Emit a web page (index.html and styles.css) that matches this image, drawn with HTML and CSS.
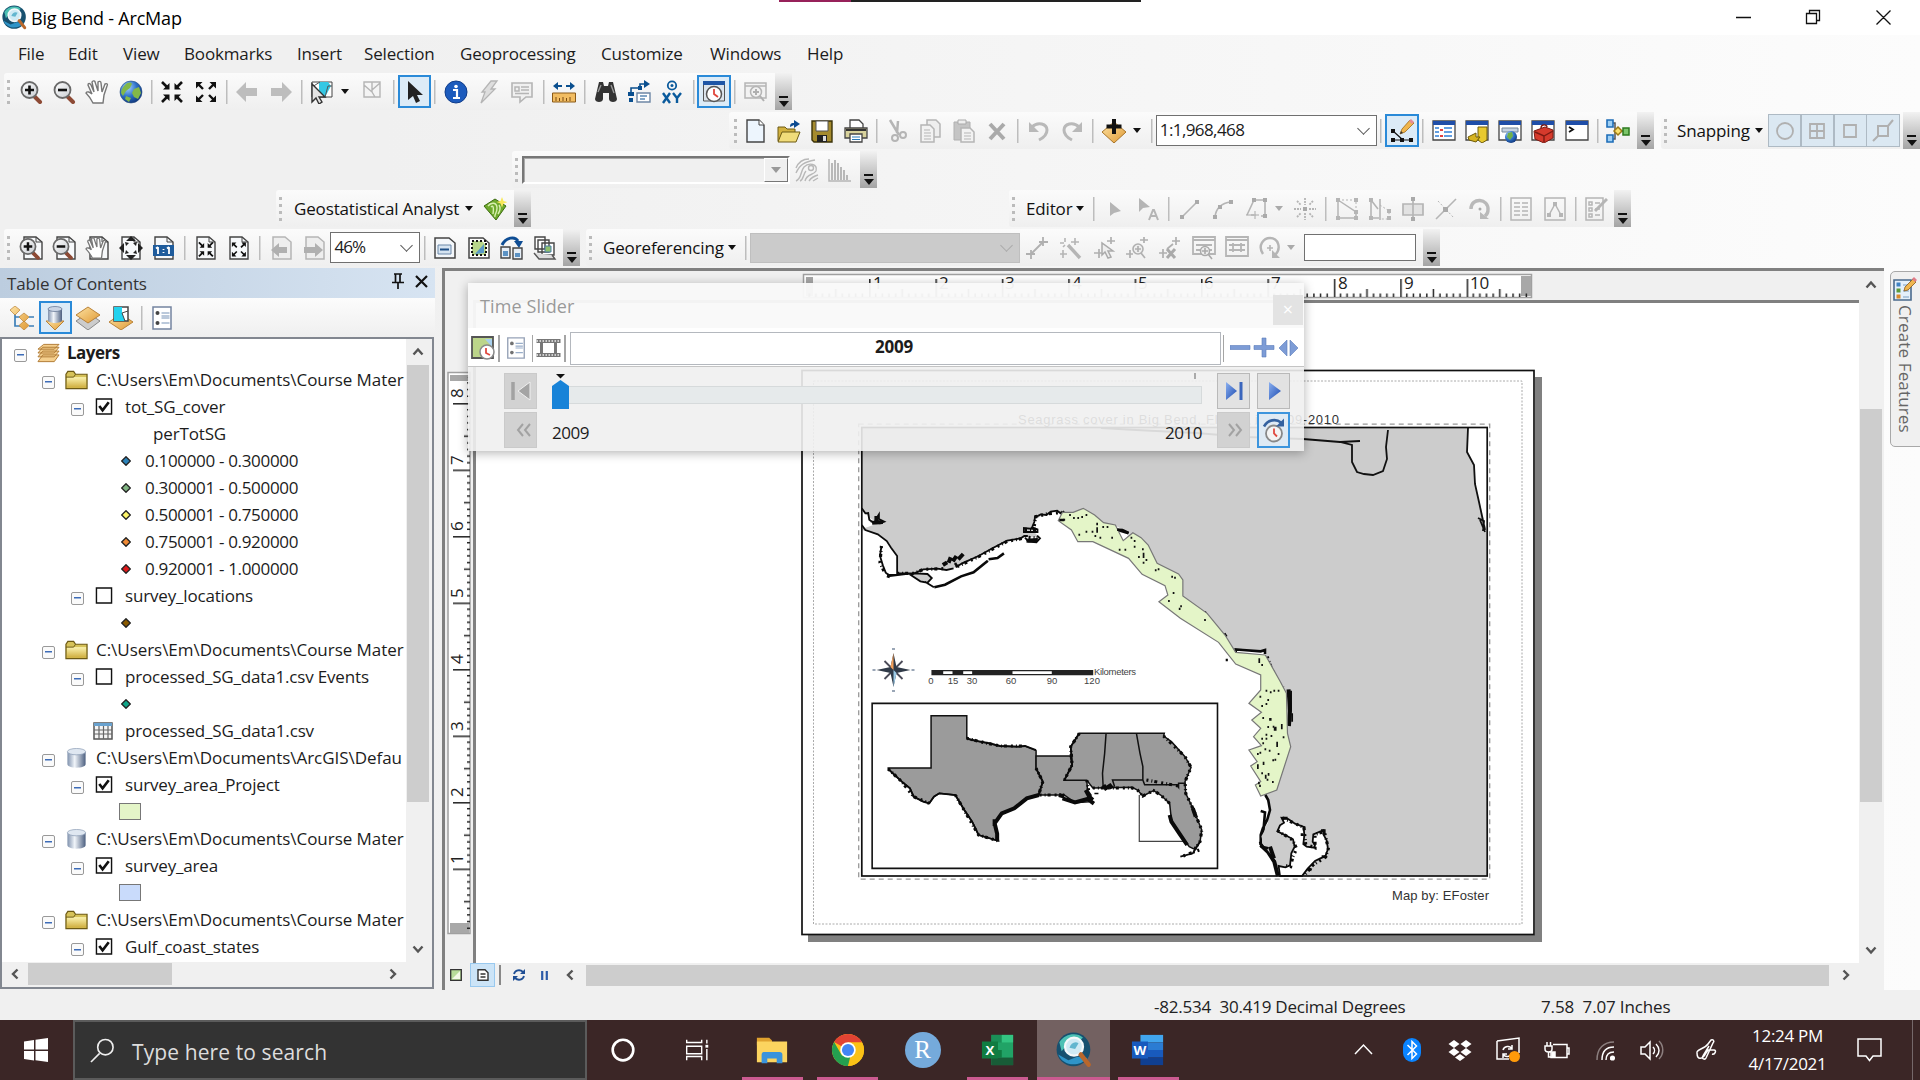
FILE: index.html
```html
<!DOCTYPE html>
<html lang="en">
<head>
<meta charset="utf-8">
<title>Big Bend - ArcMap</title>
<link rel="stylesheet" href="styles.css">
</head>
<body>
<svg class="defs" aria-hidden="true">
<defs>
<linearGradient id="gLens" x1="0" y1="0" x2="1" y2="1"><stop offset="0" stop-color="#fff"/><stop offset="1" stop-color="#c9cdd2"/></linearGradient>
<linearGradient id="gCyl" x1="0" x2="1"><stop offset="0" stop-color="#7f91ad"/><stop offset=".4" stop-color="#f1f5fa"/><stop offset="1" stop-color="#4c5f80"/></linearGradient>
<linearGradient id="gFold" x1="0" y1="0" x2="0" y2="1"><stop offset="0" stop-color="#fbf3b0"/><stop offset="1" stop-color="#cfae3e"/></linearGradient>
<linearGradient id="gOr" x1="0" y1="0" x2="1" y2="1"><stop offset="0" stop-color="#fde3a4"/><stop offset="1" stop-color="#e09a35"/></linearGradient>
<linearGradient id="gBlue" x1="0" y1="0" x2="1" y2="1"><stop offset="0" stop-color="#8bb0f0"/><stop offset="1" stop-color="#1a49b0"/></linearGradient>
<radialGradient id="gGlobe" cx=".35" cy=".3" r=".8"><stop offset="0" stop-color="#a8d4ff"/><stop offset=".5" stop-color="#2e72c8"/><stop offset="1" stop-color="#0b2c6e"/></radialGradient>
</defs>
<symbol id="lens" viewBox="0 0 24 24"><path d="M15 16l6 6" stroke="#8d4a35" stroke-width="4" stroke-linecap="round"/><circle cx="10.500" cy="10" r="8" fill="url(#gLens)" stroke="#6a6a6a" stroke-width="1.800"/></symbol>
<symbol id="zin" viewBox="0 0 24 24"><use href="#lens"/><path d="M10.500 5.500v9M6 10h9" stroke="#111" stroke-width="2.600"/></symbol>
<symbol id="zout" viewBox="0 0 24 24"><use href="#lens"/><path d="M6 10h9" stroke="#111" stroke-width="2.600"/></symbol>
<symbol id="pan" viewBox="0 0 24 24"><path d="M8 23c-2-4-4-7-7-10 1-2 4-1 6 1L3 5c0-2 2-2 3 0l3 7-2-10c1-2 3-1 3 0l3 9V2c1-1 3-1 3 1l1 9 3-8c2-1 3 0 2 2l-3 9-1 8z" fill="#fff" stroke="#777" stroke-width="1.400"/></symbol>
<symbol id="globe" viewBox="0 0 24 24"><circle cx="12" cy="12" r="11" fill="url(#gGlobe)" stroke="#234a80" stroke-width=".6"/><path d="M6 5c3-3 6-3 7-1l-2 4-4 3-3 5-2-3c0-3 2-6 4-8zM15 9l5-2 2 6-3 6-4-2-2-4zM7 16l5 2-2 4-4-3z" fill="#82b848"/></symbol>
<symbol id="fin" viewBox="0 0 24 24"><path d="M2 2l5 5M22 2l-5 5M2 22l5-5M22 22l-5-5" stroke="#111" stroke-width="2.600"/><path d="M9.500 3v6.500H3zM14.500 3v6.500H21zM9.500 21v-6.500H3zM14.500 21v-6.500H21z" fill="#111"/></symbol>
<symbol id="fout" viewBox="0 0 24 24"><path d="M4 4l5 5M20 4l-5 5M4 20l5-5M20 20l-5-5" stroke="#111" stroke-width="2.400"/><path d="M2 2v6.500L8.500 2zM22 2v6.500L15.500 2zM2 22v-6.500L8.500 22zM22 22v-6.500L15.500 22z" fill="#111"/></symbol>
<symbol id="back" viewBox="0 0 24 24"><path d="M1 12L11 2v6h11v8H11v6z" fill="#bdbdbd"/></symbol>
<symbol id="fwd" viewBox="0 0 24 24"><path d="M23 12L13 2v6H2v8h11v6z" fill="#bdbdbd"/></symbol>
<symbol id="sel" viewBox="0 0 24 24"><path d="M2 2h20v15H2z" fill="#fff" stroke="#444"/><path d="M9 2h9l3 4-6 11H9z" fill="#35c8e4"/><path d="M2 7l8-5M15 17l3-11h4" stroke="#555" fill="none"/><path d="M2 4v18l4-4 3 6 3-2-3-5h6z" fill="#e4e4e4" stroke="#333" stroke-width="1.400"/></symbol>
<symbol id="clr" viewBox="0 0 24 24"><path d="M4 2h16v15H4zM4 5l8 7V2M12 12l3 5M12 10l8-7" fill="#f4f4f4" stroke="#b5b5b5" stroke-width="1.400"/></symbol>
<symbol id="arr" viewBox="0 0 24 24"><path d="M6 1v19l5-4 3 7 4-2-3-6h6z" fill="#222"/></symbol>
<symbol id="info" viewBox="0 0 24 24"><circle cx="12" cy="12" r="11" fill="#1c5bbd" stroke="#0f3c8a"/><circle cx="12" cy="6.500" r="1.800" fill="#fff"/><path d="M9 10h4v8m-4 0h7" stroke="#fff" stroke-width="2.200" fill="none"/></symbol>
<symbol id="bolt" viewBox="0 0 24 24"><path d="M14 1h6l-6 8h4L4 23l4-11H5z" fill="#dedede" stroke="#b5b5b5" stroke-width="1.300"/></symbol>
<symbol id="html" viewBox="0 0 24 24"><path d="M2 3h20v14h-6l-6 5v-5H2z" fill="#f0f0f0" stroke="#b5b5b5" stroke-width="1.600"/><path d="M5 7h4v4H5zM11 7h8M11 10h8M5 13.500h14" stroke="#b5b5b5" stroke-width="1.500" fill="none"/></symbol>
<symbol id="meas" viewBox="0 0 24 24"><path d="M1 6l5-4v3h4v2H6v3zM23 6l-5-4v3h-4v2h4v3z" fill="#0a4f8f"/><path d="M.5 13h23v9H.5z" fill="#f2bd62" stroke="#8a5a18"/><path d="M4 21v-4M7.500 21v-3M11 21v-4M14.500 21v-3M18 21v-4" stroke="#7a4a10"/></symbol>
<symbol id="bino" viewBox="0 0 24 24"><path d="M5 2h4l1 4h4l1-4h4l4 17c0 4-8 4-8 0v-6h-6v6c0 4-8 4-8 0z" fill="#333"/><path d="M4 12l3-7M17 5l3 8" stroke="#999" stroke-width="1.400"/></symbol>
<symbol id="route" viewBox="0 0 24 24"><path d="M4 13V8h9V4h5" stroke="#0a4f8f" stroke-width="1.600" fill="none"/><path d="M17 0l6 4-6 4zM1 12h6v4H1zM2 18h4v4H2zM11 6h4v4h-4z" fill="#0a4f8f"/><path d="M10 13h13v9H10z" fill="#fff" stroke="#6d87a5" stroke-width="1.400"/><path d="M13 16h7M13 19h5" stroke="#0a4f8f"/></symbol>
<symbol id="xy" viewBox="0 0 24 24"><circle cx="12" cy="5.500" r="4.200" fill="none" stroke="#0a5a9c" stroke-width="1.800"/><circle cx="12" cy="5.500" r="1.500" fill="#0a5a9c"/><path d="M3 13l7 10M10 13l-7 10M13 13l4 5 4-5M17 18v5" stroke="#0a5a9c" stroke-width="2.400" fill="none"/></symbol>
<symbol id="time" viewBox="0 0 24 24"><path d="M1.500 2h21v19h-21z" fill="#dce4ec" stroke="#555"/><path d="M1 1h22v4H1z" fill="#1f56a6"/><circle cx="12" cy="14" r="7.500" fill="#fff" stroke="#555" stroke-width="1.500"/><path d="M12 9v5l4 3" stroke="#e0463c" stroke-width="1.800" fill="none"/></symbol>
<symbol id="viewer" viewBox="0 0 24 24"><path d="M1 3h21v15H1zM1 6h21" fill="#f2f2f2" stroke="#b5b5b5" stroke-width="1.500"/><circle cx="12" cy="12" r="5.500" fill="#f2f2f2" stroke="#b5b5b5" stroke-width="1.500"/><path d="M9 12h6M12 9v6M16 16l4 5" stroke="#b0b0b0" stroke-width="2"/></symbol>
<symbol id="new" viewBox="0 0 24 24"><path d="M3 1h12l5 5v17H3z" fill="#edf5fd" stroke="#444" stroke-width="1.400"/><path d="M15 1v5h5" fill="#fff" stroke="#444"/></symbol>
<symbol id="open" viewBox="0 0 24 24"><path d="M1 8h7l2 2h8v12H1z" fill="#d2b13f" stroke="#6d5a14"/><path d="M5 13h18l-4 10H1z" fill="#f1dc7a" stroke="#6d5a14"/><path d="M13 8c0-4 2-4 4-4V1l6 4-6 4V6" fill="#0b4a92"/></symbol>
<symbol id="save" viewBox="0 0 24 24"><path d="M2 2h20v21H4l-2-2z" fill="#a58b2e" stroke="#3b3208" stroke-width="1.400"/><path d="M6 2h12v10H6z" fill="#fff" stroke="#555"/><path d="M7 16h10v7H7z" fill="#222"/><path d="M13 17h3v5h-3z" fill="#ddd"/></symbol>
<symbol id="print" viewBox="0 0 24 24"><path d="M6 1h9l4 4v6H6z" fill="#fff" stroke="#444" stroke-width="1.300"/><path d="M1 9h22v10H1z" fill="#d8d29c" stroke="#444" stroke-width="1.300"/><path d="M2 11h20" stroke="#333" stroke-width="2"/><path d="M6 15h12v8H6z" fill="#fff" stroke="#444" stroke-width="1.300"/><path d="M8 18h8M8 20.500h8" stroke="#2878b8"/></symbol>
<symbol id="cut" viewBox="0 0 24 24"><path d="M5 1l9 15M13 2l-1 12" stroke="#b5b5b5" stroke-width="2.500"/><circle cx="10" cy="19" r="3" fill="none" stroke="#b5b5b5" stroke-width="2"/><circle cx="18" cy="16" r="3" fill="none" stroke="#b5b5b5" stroke-width="2"/></symbol>
<symbol id="copy" viewBox="0 0 24 24"><path d="M8 1h9l4 4v13H8z" fill="#eee" stroke="#b5b5b5" stroke-width="1.500"/><path d="M2 6h9l4 4v13H2z" fill="#f2f2f2" stroke="#b5b5b5" stroke-width="1.500"/><path d="M5 11h6M5 14h7M5 17h7M5 20h7" stroke="#b5b5b5"/></symbol>
<symbol id="paste" viewBox="0 0 24 24"><path d="M2 3h16v18H2z" fill="#c4c4c4" stroke="#b0b0b0"/><path d="M6 1h8v4H6z" fill="#eee" stroke="#aaa"/><path d="M9 9h9l4 4v10H9z" fill="#f2f2f2" stroke="#b5b5b5" stroke-width="1.500"/><path d="M12 14h7M12 17h7M12 20h7" stroke="#b5b5b5"/></symbol>
<symbol id="del" viewBox="0 0 24 24"><path d="M5 5l14 15M19 5L5 20" stroke="#aaa" stroke-width="4"/></symbol>
<symbol id="undo" viewBox="0 0 24 24"><path d="M5 8c6-6 15-3 15 3 0 5-4 8-8 10" stroke="#b9b9b9" stroke-width="3" fill="none"/><path d="M2 3v10h10z" fill="#b9b9b9"/></symbol>
<symbol id="redo" viewBox="0 0 24 24"><path d="M19 8C13 2 4 5 4 11c0 5 4 8 8 10" stroke="#b9b9b9" stroke-width="3" fill="none"/><path d="M22 3v10H12z" fill="#b9b9b9"/></symbol>
<symbol id="add" viewBox="0 0 24 24"><path d="M12 3L24 13 12 24 0 13z" fill="url(#gOr)" stroke="#a8752a"/><path d="M12 0v15M4.500 7.500h15" stroke="#111" stroke-width="4"/></symbol>
<symbol id="edt" viewBox="0 0 24 24"><path d="M3 12l10 9M3 21h18" stroke="#111" stroke-width="1.200"/><path d="M1 10h4v4H1zM1 19h4v4H1zM10 19h4v4h-4zM19 19h4v4h-4z" fill="#111"/><path d="M10 15l2-5 8-9 4 3-9 9z" fill="#f0b64e" stroke="#a06b18" stroke-width=".8"/><path d="M19 2l2-2 3 3-2 2z" fill="#e58a96"/><path d="M10 15l1-3 2 2z" fill="#333"/></symbol>
<symbol id="win" viewBox="0 0 24 24"><path d="M1 2h22v19H1z" fill="#fff" stroke="#444" stroke-width="1.300"/><path d="M1 2h22v4H1z" fill="#1f4ea8"/></symbol>
<symbol id="wtoc" viewBox="0 0 24 24"><use href="#win"/><path d="M3 9h4M3 13h4M3 17h4M12 9h8M12 13h8M12 17h8" stroke="#2f7fd8" stroke-width="1.600"/><path d="M8 11h3M8 17h3" stroke="#e04040" stroke-width="2"/></symbol>
<symbol id="wcat" viewBox="0 0 24 24"><use href="#win"/><path d="M13 8h9v13l-5 3-4-3z" fill="#e8c92f" stroke="#6f5c0a"/><path d="M3 18l8-4v4h4l-4 5-7-2z" fill="#d7b421" stroke="#6f5c0a"/></symbol>
<symbol id="wsea" viewBox="0 0 24 24"><use href="#win"/><path d="M4 9h16v4H4z" fill="#c6d3e2" stroke="#789"/><circle cx="13" cy="18" r="6" fill="url(#gGlobe)"/><path d="M10 14l4-1 1 4-3 4-3-3z" fill="#6fb04a"/></symbol>
<symbol id="wbox" viewBox="0 0 24 24"><use href="#win"/><path d="M3 12l11-4 8 3v8l-9 5-9-4z" fill="#d63a2c" stroke="#7c1a12"/><path d="M4 13l9 4 9-5M13 17v6M10 9c0-4 6-4 6-1" stroke="#7c1a12" stroke-width="1.400" fill="none"/></symbol>
<symbol id="wpy" viewBox="0 0 24 24"><use href="#win"/><path d="M4 8l4 2.500L4 13" stroke="#111" stroke-width="1.800" fill="none"/></symbol>
<symbol id="model" viewBox="0 0 24 24"><path d="M6 4h3v16H6M9 12h10" stroke="#555" stroke-width="1.500" fill="none"/><path d="M1 1h6v7H1zM1 16h6v7H1z" fill="#9fd0f5" stroke="#1e6db8" stroke-width="1.600"/><path d="M12 8l4 4-4 4-4-4z" fill="#fbe06c" stroke="#9c7a14" stroke-width="1.500"/><path d="M17 9h6v7h-6z" fill="#7cc56a" stroke="#2d7a1e" stroke-width="1.500"/></symbol>
<symbol id="s1" viewBox="0 0 24 24"><circle cx="12" cy="12" r="8" fill="none" stroke="#b0b0b0" stroke-width="1.800"/></symbol>
<symbol id="s2" viewBox="0 0 24 24"><path d="M5 5h14v14H5zM5 12h14M12 5v14" fill="none" stroke="#b0b0b0" stroke-width="1.800"/></symbol>
<symbol id="s3" viewBox="0 0 24 24"><path d="M6 6h12v12H6z" fill="none" stroke="#b0b0b0" stroke-width="1.800"/></symbol>
<symbol id="s4" viewBox="0 0 24 24"><path d="M7 7h10v10H7zM2 22l5-5M17 7l5-6" fill="none" stroke="#b0b0b0" stroke-width="2"/></symbol>
<symbol id="cont" viewBox="0 0 24 24"><path d="M1 10C4 3 9 1 14 1M1 15C5 6 10 4 20 2M1 23c6-3 4-9 8-14 5-5 14-3 12 4-3 5-9 2-11 10M5 23c4-2 3-7 6-10M14 23c2-3 5-5 9-6M18 23l5-3" fill="none" stroke="#b8b8b8" stroke-width="1.400"/><circle cx="16" cy="10" r="2.500" fill="none" stroke="#b8b8b8" stroke-width="1.400"/></symbol>
<symbol id="hist" viewBox="0 0 24 24"><path d="M1 1v22h22" stroke="#b5b5b5" stroke-width="1.500" fill="none"/><path d="M4 5v17M7 2v20M10 5v17M13 9v13M16 12v10M19 17v5" stroke="#b8b8b8" stroke-width="2"/></symbol>
<symbol id="geo" viewBox="0 0 24 24"><path d="M12 2l11 7-10 14L1 9z" fill="#6ea92c" stroke="#3c6b10"/><path d="M5 9c3-4 9-4 9 2s-3 6-2 9M8 10c2-2 3 0 2 7M16 8c2 3 1 6-1 9" stroke="#d8efb0" stroke-width="1.400" fill="none"/><path d="M19 0l1.500 4 4 1-4 1.500-1.500 4-1.500-4-4-1.500 4-1z" fill="#f8e85a"/></symbol>
<symbol id="ea" viewBox="0 0 24 24"><path d="M7 5v14l4-3 7-2z" fill="#b5b5b5"/></symbol>
<symbol id="eaa" viewBox="0 0 24 24"><path d="M3 1v14l4-4 7-1z" fill="#b5b5b5"/><path d="M13 23l4-10h1l4 10M14.500 19h6" stroke="#b5b5b5" stroke-width="2" fill="none"/></symbol>
<symbol id="ln" viewBox="0 0 24 24"><path d="M4 20L19 5" stroke="#b5b5b5" stroke-width="1.600"/><path d="M2 18h4v4H2zM17 3h4v4h-4z" fill="#aaa"/></symbol>
<symbol id="arc" viewBox="0 0 24 24"><path d="M4 20c1-9 6-14 16-15" stroke="#b5b5b5" stroke-width="1.600" fill="none"/><path d="M2 18h4v4H2zM18 3h4v4h-4zM7 8h4v4H7z" fill="#aaa"/></symbol>
<symbol id="trc" viewBox="0 0 24 24"><path d="M2 18L9 3h11v16h-4" stroke="#b5b5b5" stroke-width="1.600" fill="none"/><path d="M7 1h4v4H7zM18 1h4v4h-4zM18 17h4v4h-4z" fill="#aaa"/><path d="M1 18h8M10 14v8M6 18h8" stroke="#aaa"/></symbol>
<symbol id="pt" viewBox="0 0 24 24"><path d="M12 1v7M12 16v7M1 12h7M16 12h7M4 4l4 4M20 4l-4 4M4 20l4-4M20 20l-4-4" stroke="#b5b5b5" stroke-width="1.800" stroke-dasharray="2 1"/><path d="M10 10h4v4h-4z" fill="#aaa"/></symbol>
<symbol id="ev" viewBox="0 0 24 24"><path d="M3 3v18h18v-6L3 3" stroke="#b5b5b5" stroke-width="1.500" fill="none"/><path d="M3 3h18v12" stroke="#b5b5b5" stroke-dasharray="2 2" fill="none"/><path d="M1 1h4v4H1zM1 19h4v4H1zM19 19h4v4h-4zM19 13h4v4h-4zM19 1h4v4h-4z" fill="#b5b5b5"/></symbol>
<symbol id="rsh" viewBox="0 0 24 24"><path d="M3 3v18h8M3 3l7 9M12 2v21" stroke="#b5b5b5" stroke-width="1.600" fill="none"/><path d="M12 8l9 6v8h-9" stroke="#b5b5b5" stroke-dasharray="2 2" fill="none"/><path d="M1 1h4v4H1zM1 19h4v4H1zM19 12h4v4h-4zM19 19h4v4h-4z" fill="#b5b5b5"/></symbol>
<symbol id="cutp" viewBox="0 0 24 24"><path d="M2 7h20v11H2z" fill="#e2e2e2" stroke="#b5b5b5" stroke-width="1.700"/><path d="M12 1v22" stroke="#b5b5b5" stroke-width="1.700"/><path d="M10 0h4v4h-4zM10 20h4v4h-4z" fill="#aaa"/></symbol>
<symbol id="split" viewBox="0 0 24 24"><path d="M2 22L22 2" stroke="#b5b5b5" stroke-width="1.600"/><path d="M4 4l16 17" stroke="#b5b5b5" stroke-dasharray="2 2"/><path d="M9 10h5v5H9z" fill="#aaa"/></symbol>
<symbol id="rot" viewBox="0 0 24 24"><path d="M3 12c0-12 18-11 17 1 0 4-2 5-3 6" stroke="#b9b9b9" stroke-width="3.400" fill="none"/><path d="M12 15l9 7H12z" fill="#b9b9b9"/><circle cx="12" cy="12" r="1.500" fill="#aaa"/></symbol>
<symbol id="attr" viewBox="0 0 24 24"><path d="M2 1h20v22H2zM5 6h6M5 10h6M5 14h6M5 18h6M13 6h6M13 10h6M13 14h6M13 18h6" fill="none" stroke="#b5b5b5" stroke-width="1.500"/></symbol>
<symbol id="skp" viewBox="0 0 24 24"><path d="M2 1h20v22H2zM6 18l6-11 6 11" fill="none" stroke="#b5b5b5" stroke-width="1.500"/><path d="M10 5h4v4h-4zM4 16h4v4H4zM16 16h4v4h-4z" fill="#b5b5b5"/></symbol>
<symbol id="cfg" viewBox="0 0 24 24"><path d="M2 1h17v22H2zM5 5h3v3H5zM5 11h3v3H5zM5 17h3v3H5zM11 6h5M11 12h5M11 18h5" fill="none" stroke="#b5b5b5" stroke-width="1.500"/><path d="M11 14l12-12" stroke="#b5b5b5" stroke-width="3"/></symbol>
<symbol id="page" viewBox="0 0 24 24"><path d="M5 1h12l6 5v17H5z" fill="#f7f9fb" stroke="#444" stroke-width="1.400"/><path d="M17 1v5h6" fill="none" stroke="#444"/></symbol>
<symbol id="pzin" viewBox="0 0 24 24"><use href="#page"/><g transform="translate(-1 1) scale(.95)"><use href="#zin" width="24" height="24"/></g></symbol>
<symbol id="pzout" viewBox="0 0 24 24"><use href="#page"/><g transform="translate(-1 1) scale(.95)"><use href="#zout" width="24" height="24"/></g></symbol>
<symbol id="ppan" viewBox="0 0 24 24"><use href="#page"/><use href="#pan" width="22" height="24"/></symbol>
<symbol id="pfull" viewBox="0 0 24 24"><use href="#page" x="-2"/><path d="M12 0l5 5H7zM12 24l5-5H7zM0 12l5-5v10zM24 12l-5-5v10zM6 6l4 1-3 3zM18 6l-4 1 3 3zM6 18l4-1-3-3zM18 18l-4-1 3-3z" fill="#222"/></symbol>
<symbol id="p11" viewBox="0 0 24 24"><use href="#page" x="-2"/><path d="M1 9h21v11H1z" fill="#1f5c9c"/><path d="M6 11v7M17 11v7M4 12.500l2-1.500M15 12.500l2-1.500M11.500 13v1M11.500 16v1" stroke="#fff" stroke-width="1.800"/></symbol>
<symbol id="pfin" viewBox="0 0 24 24"><use href="#page" x="-2"/><g transform="translate(3.500 5) scale(.7)"><use href="#fin" width="24" height="24"/></g></symbol>
<symbol id="pfout" viewBox="0 0 24 24"><use href="#page" x="-2"/><g transform="translate(3.500 5) scale(.7)"><use href="#fout" width="24" height="24"/></g></symbol>
<symbol id="gpage" viewBox="0 0 24 24"><path d="M4 1h12l6 5v17H4z" fill="#eee" stroke="#b5b5b5" stroke-width="1.500"/></symbol>
<symbol id="pback" viewBox="0 0 24 24"><use href="#gpage"/><path d="M2 14l8-7v4h8v6h-8v4z" fill="#b0b0b0"/></symbol>
<symbol id="pfwd" viewBox="0 0 24 24"><use href="#gpage"/><path d="M21 14l-8-7v4H2v6h11v4z" fill="#b0b0b0"/></symbol>
<symbol id="drf" viewBox="0 0 24 24"><path d="M2 2h14l6 5v15H2z" fill="#f4f7fa" stroke="#444" stroke-width="1.500"/><path d="M5 9h13v9H5z" fill="#d6e4f1" stroke="#6a87a8"/><path d="M7 13.500h9" stroke="#1e4f86" stroke-width="2"/></symbol>
<symbol id="foc" viewBox="0 0 24 24"><path d="M2 2h14l6 5v15H2z" fill="#fff" stroke="#444" stroke-width="1.500"/><path d="M5 5h10l4 4v10H5z" fill="#b8d68a"/><path d="M8 18l9-10v9z" fill="#5a9ac8"/><path d="M5 5h14v14H5z" fill="none" stroke="#111" stroke-width="2" stroke-dasharray="2 2"/></symbol>
<symbol id="chg" viewBox="0 0 24 24"><path d="M2 9C6 1 15 0 18 5" stroke="#0e4d94" stroke-width="3" fill="none"/><path d="M14 5h9l-4 7z" fill="#0e4d94"/><path d="M1 11h9v11H1zM13 12h9v11h-9z" fill="#e6eef6" stroke="#444" stroke-width="1.400"/><path d="M3 15h5v5H3zM15 17h5v4h-5z" fill="#5b92c4"/></symbol>
<symbol id="ddp" viewBox="0 0 24 24"><path d="M2 1h10v12H2zM5 4h11v12H5zM9 7h12v12H9z" fill="#fff" stroke="#444" stroke-width="1.400"/><path d="M12 10h6v6h-6z" fill="#8fc06a" stroke="#4a7ea8"/><path d="M1 17l5 6h16l-3-4" stroke="#555" stroke-width="1.400" fill="#ddd"/></symbol>
<symbol id="g1" viewBox="0 0 24 24"><path d="M1 18h9M6 14v9M14 6h9M18 1v9M7 17L17 7" stroke="#b0b0b0" stroke-width="1.800"/></symbol>
<symbol id="g2" viewBox="0 0 24 24"><path d="M10 9l12 13" stroke="#b5b5b5" stroke-width="3.400"/><path d="M17 2v7M13 6h8M2 18h7M5 14v8M7 2v4M2 7h4M5 11l2-2" stroke="#b5b5b5" stroke-width="1.600"/></symbol>
<symbol id="g3" viewBox="0 0 24 24"><path d="M10 7v12l3-3 3 6 3-1-3-6h5z" fill="#eee" stroke="#aaa" stroke-width="1.500"/><path d="M2 17h8M7 13v9M15 5h8M19 1v7" stroke="#b0b0b0" stroke-width="1.700"/></symbol>
<symbol id="g4" viewBox="0 0 24 24"><circle cx="13" cy="13" r="5" fill="#eee" stroke="#b0b0b0" stroke-width="1.600"/><path d="M10 13h6M13 10v6M16 17l4 5M1 18h7M5 14v8M15 4h8M19 1v6" stroke="#b0b0b0" stroke-width="1.700"/></symbol>
<symbol id="g5" viewBox="0 0 24 24"><path d="M9 13l8 9M17 13l-8 9" stroke="#aaa" stroke-width="3"/><path d="M1 17h8M5 13v9M14 5h8M18 1v8M9 13l6-5" stroke="#b0b0b0" stroke-width="1.700"/></symbol>
<symbol id="g6" viewBox="0 0 24 24"><path d="M1 1h22v17H1zM1 4h22M4 9h16M4 14h16" fill="none" stroke="#b5b5b5" stroke-width="1.800"/><circle cx="13" cy="15" r="4.500" fill="#eee" stroke="#aaa" stroke-width="1.500"/><path d="M10 15h6M13 12v6M16 18l4 5" stroke="#aaa" stroke-width="1.600"/></symbol>
<symbol id="g7" viewBox="0 0 24 24"><path d="M1 1h22v19H1zM1 4h22M4 9h16M4 14h16M8 7v9M16 7v9" fill="none" stroke="#b5b5b5" stroke-width="1.800"/></symbol>
<symbol id="g8" viewBox="0 0 24 24"><path d="M5 18C-1 9 6 2 12 2c8 0 12 10 5 17" fill="none" stroke="#b5b5b5" stroke-width="2.400"/><path d="M14 14v8h8z" fill="#b5b5b5"/><path d="M9 12h6M12 9v6" stroke="#b5b5b5" stroke-width="1.600"/></symbol>
<symbol id="arcgis" viewBox="0 0 32 32"><circle cx="15.500" cy="15.500" r="15" fill="#17506f"/><path d="M3 9c5-8 16-9 21-4l-4 3-9 2-6 7z" fill="#4cc0b4"/><path d="M2 20c4 10 18 12 26 3l-9-1-8 3z" fill="#2f94c8"/><circle cx="16" cy="13" r="8" fill="#cfeaf4" stroke="#f4f8fa" stroke-width="2"/><path d="M12 14c1-4 5-6 8-4l-3 5z" fill="#62b6cf"/><path d="M22 20l7 9" stroke="#b9672b" stroke-width="4" stroke-linecap="round"/></symbol>
<symbol id="folder" viewBox="0 0 24 20"><path d="M1 4l2-3h6l2 3h12v15H1z" fill="#d6c25a" stroke="#6d5a14" stroke-width="1.300"/><path d="M2 7h20v11H2z" fill="url(#gFold)"/><path d="M1 7l8 0 2-3" fill="none" stroke="#6d5a14"/></symbol>
<symbol id="db" viewBox="0 0 22 22"><path d="M1 4v14c0 5 20 5 20 0V4z" fill="url(#gCyl)"/><ellipse cx="11" cy="4" rx="10" ry="3.500" fill="#dfe7f1" stroke="#7f91ad" stroke-width=".7"/></symbol>
<symbol id="layers" viewBox="0 0 24 20"><g fill="#f5cf8d" stroke="#b07a34"><path d="M6 12h17l-5 7H1zM6 8h17l-5 6H1zM6 4h17l-5 6H1zM7 1h16l-5 5H1z"/></g></symbol>
<symbol id="tbl" viewBox="0 0 20 18"><path d="M1 1h18v16H1z" fill="#f5f5f5" stroke="#555" stroke-width="1.500"/><path d="M1 1h18v3H1z" fill="#69a2cf"/><path d="M1 8h18M1 12h18M6 4v13M10.500 4v13M15 4v13" stroke="#666" stroke-width="1.200"/></symbol>
<symbol id="t1" viewBox="0 0 24 24"><path d="M5 6v14h8M5 11h8M19 11h5M19 20h5" stroke="#3c7fb8" stroke-width="1.700" fill="none"/><path d="M5 0l5 4-5 5-5-5zM14 7l5 4-5 5-5-5zM14 15l5 4.500-5 4.500-5-4.500z" fill="url(#gOr)" stroke="#b98238" stroke-width=".7"/></symbol>
<symbol id="t2" viewBox="0 0 24 24"><path d="M3 15h18l-9 9z" fill="url(#gOr)" stroke="#b98238"/><path d="M5 3v11c0 4 14 4 14 0V3z" fill="url(#gCyl)"/><ellipse cx="12" cy="3" rx="7" ry="2.500" fill="#c9d4e4" stroke="#5c6f8e" stroke-width=".7"/></symbol>
<symbol id="t3" viewBox="0 0 24 24"><path d="M12 7l12 8-12 9L0 15z" fill="#ccc" stroke="#888"/><path d="M12 1l12 8-12 8L0 9z" fill="url(#gOr)" stroke="#b98238"/></symbol>
<symbol id="t4" viewBox="0 0 24 24"><path d="M12 8l12 8-12 8L0 16z" fill="url(#gOr)" stroke="#b98238"/><path d="M5 1h14v14H5z" fill="#fff" stroke="#444" stroke-width="1.500"/><path d="M5 1h8v6l3 8H5z" fill="#22d2ee"/><path d="M13 7l6-2M13 7l3 8" stroke="#444"/></symbol>
<symbol id="t5" viewBox="0 0 24 24"><path d="M3 1h18v22H3z" fill="#fff" stroke="#7484a0" stroke-width="1.500"/><circle cx="7.500" cy="7" r="2" fill="#444"/><circle cx="7.500" cy="17" r="2" fill="#444"/><path d="M11.500 7h8M11.500 12h8M11.500 17h8M11.500 10h8" stroke="#7893b8" stroke-width="1.200"/></symbol>
<symbol id="chk" viewBox="0 0 18 18"><path d="M1 1h16v16H1z" fill="#fff" stroke="#111" stroke-width="1.500"/><path d="M4 8.500l3.500 4.500 6.500-8.500" fill="none" stroke="#111" stroke-width="2.800"/></symbol>
<symbol id="unchk" viewBox="0 0 18 18"><path d="M1 1h16v16H1z" fill="#fff" stroke="#111" stroke-width="1.500"/></symbol>
<symbol id="dia" viewBox="0 0 10 10"><path d="M5 .7L9.300 5 5 9.300.7 5z" fill="currentColor" stroke="#222" stroke-width="1.300"/></symbol>
<symbol id="cv" viewBox="0 0 12 12"><path d="M1.500 8.500L6 3.500l4.500 5" fill="none" stroke="#555" stroke-width="2.400"/></symbol>
<symbol id="cl" viewBox="0 0 12 12"><path d="M8.500 1.500L4 6l4.500 4.500" fill="none" stroke="#555" stroke-width="2.400"/></symbol>
</svg>

<div class="edge"></div>
<header class="title"><svg class="app"><use href="#arcgis"/></svg><span>Big Bend - ArcMap</span>
<svg class="wc" viewBox="0 0 160 20"><path d="M0 9.500h15M70.500 5.500h10v10h-10zM73.500 5.500v-3h10v10h-3M140.500 2.500l14 14M154.500 2.500l-14 14" fill="none" stroke="#111" stroke-width="1.300"/></svg></header>
<nav class="menu"><span>File</span><span>Edit</span><span>View</span><span>Bookmarks</span><span>Insert</span><span>Selection</span><span>Geoprocessing</span><span>Customize</span><span>Windows</span><span>Help</span></nav>

<section class="bars">
<div class="row">
<div class="tb r1"><i class="grip"></i><b><svg><use href="#zin"/></svg></b><b><svg><use href="#zout"/></svg></b><b><svg><use href="#pan"/></svg></b><b><svg><use href="#globe"/></svg></b><i class="sep"></i><b><svg><use href="#fin"/></svg></b><b><svg><use href="#fout"/></svg></b><i class="sep"></i><b><svg><use href="#back"/></svg></b><b><svg><use href="#fwd"/></svg></b><i class="sep"></i><b><svg><use href="#sel"/></svg></b><i class="dd"></i><b><svg><use href="#clr"/></svg></b><i class="sep"></i><b class="on"><svg><use href="#arr"/></svg></b><i class="sep"></i><b><svg><use href="#info"/></svg></b><b><svg><use href="#bolt"/></svg></b><b><svg><use href="#html"/></svg></b><i class="sep"></i><b><svg><use href="#meas"/></svg></b><i class="sep"></i><b><svg><use href="#bino"/></svg></b><b><svg><use href="#route"/></svg></b><b><svg><use href="#xy"/></svg></b><i class="sep"></i><b class="on"><svg><use href="#time"/></svg></b><i class="sep"></i><b><svg><use href="#viewer"/></svg></b><i class="ovf"></i></div>
</div>
<div class="row">
<div class="tb r2"><i class="grip"></i><b><svg><use href="#new"/></svg></b><b><svg><use href="#open"/></svg></b><b><svg><use href="#save"/></svg></b><b><svg><use href="#print"/></svg></b><i class="sep"></i><b><svg><use href="#cut"/></svg></b><b><svg><use href="#copy"/></svg></b><b><svg><use href="#paste"/></svg></b><b><svg><use href="#del"/></svg></b><i class="sep"></i><b><svg><use href="#undo"/></svg></b><b><svg><use href="#redo"/></svg></b><i class="sep"></i><b><svg><use href="#add"/></svg></b><i class="dd"></i><i class="sep"></i><span class="combo scale"><span>1:1,968,468</span><em></em></span><i class="sep"></i><b class="on"><svg><use href="#edt"/></svg></b><i class="sep"></i><b><svg><use href="#wtoc"/></svg></b><b><svg><use href="#wcat"/></svg></b><b><svg><use href="#wsea"/></svg></b><b><svg><use href="#wbox"/></svg></b><b><svg><use href="#wpy"/></svg></b><i class="sep"></i><b><svg><use href="#model"/></svg></b><i class="ovf"></i></div>
<div class="tb snap"><i class="grip"></i><span class="lbl w76">Snapping</span><i class="dd"></i><b class="sn"><svg><use href="#s1"/></svg></b><b class="sn"><svg><use href="#s2"/></svg></b><b class="sn"><svg><use href="#s3"/></svg></b><b class="sn"><svg><use href="#s4"/></svg></b><i class="ovf"></i></div>
</div>
<div class="row">
<div class="tb r3"><i class="grip"></i><span class="oldcombo"><em></em></span><b><svg><use href="#cont"/></svg></b><b><svg><use href="#hist"/></svg></b><i class="ovf"></i></div>
</div>
<div class="row">
<div class="tb r4"><i class="grip"></i><span class="lbl w169">Geostatistical Analyst</span><i class="dd"></i><b><svg><use href="#geo"/></svg></b><i class="ovf"></i></div>
<div class="tb ed"><i class="grip"></i><span class="lbl w48">Editor</span><i class="dd"></i><i class="sep"></i><b><svg><use href="#ea"/></svg></b><b><svg><use href="#eaa"/></svg></b><i class="sep"></i><b><svg><use href="#ln"/></svg></b><b><svg><use href="#arc"/></svg></b><b><svg><use href="#trc"/></svg></b><i class="dd off"></i><b><svg><use href="#pt"/></svg></b><i class="sep"></i><b><svg><use href="#ev"/></svg></b><b><svg><use href="#rsh"/></svg></b><b><svg><use href="#cutp"/></svg></b><b><svg><use href="#split"/></svg></b><b><svg><use href="#rot"/></svg></b><i class="sep"></i><b><svg><use href="#attr"/></svg></b><b><svg><use href="#skp"/></svg></b><i class="sep"></i><b><svg><use href="#cfg"/></svg></b><i class="ovf"></i></div>
</div>
<div class="row">
<div class="tb r5"><i class="grip"></i><b><svg><use href="#pzin"/></svg></b><b><svg><use href="#pzout"/></svg></b><b><svg><use href="#ppan"/></svg></b><b><svg><use href="#pfull"/></svg></b><b><svg><use href="#p11"/></svg></b><i class="sep"></i><b><svg><use href="#pfin"/></svg></b><b><svg><use href="#pfout"/></svg></b><i class="sep"></i><b><svg><use href="#pback"/></svg></b><b><svg><use href="#pfwd"/></svg></b><span class="combo zoom"><span>46%</span><em></em></span><i class="sep"></i><b><svg><use href="#drf"/></svg></b><b><svg><use href="#foc"/></svg></b><b><svg><use href="#chg"/></svg></b><b><svg><use href="#ddp"/></svg></b><i class="ovf"></i></div>
<div class="tb geor"><i class="grip"></i><span class="lbl w122">Georeferencing</span><i class="dd"></i><i class="sep"></i><span class="combo dis"><em></em></span><b><svg><use href="#g1"/></svg></b><b><svg><use href="#g2"/></svg></b><b><svg><use href="#g3"/></svg></b><b><svg><use href="#g4"/></svg></b><b><svg><use href="#g5"/></svg></b><b><svg><use href="#g6"/></svg></b><b><svg><use href="#g7"/></svg></b><b><svg><use href="#g8"/></svg></b><i class="dd off"></i><span class="combo box"></span><i class="ovf"></i></div>
</div>
</section>

<main>
<aside class="toc">
<div class="toc-h"><span>Table Of Contents</span><svg viewBox="0 0 50 20"><path d="M7 2h8M8.500 2v8M13 2v8M5 10.500h12M11 10.500V17" stroke="#111" stroke-width="1.700" fill="none"/><path d="M29 4l11 11M40 4L29 15" stroke="#111" stroke-width="2.200"/></svg></div>
<div class="toc-t"><b><svg><use href="#t1"/></svg></b><b class="on"><svg><use href="#t2"/></svg></b><b><svg><use href="#t3"/></svg></b><b><svg><use href="#t4"/></svg></b><i class="sep"></i><b><svg><use href="#t5"/></svg></b></div>
<div class="treebox">
<div class="tree">
<div class="n l1"><i class="mi"></i><svg class="fo"><use href="#layers"/></svg><strong>Layers</strong></div>
<div class="n l2"><i class="mi"></i><svg class="fo"><use href="#folder"/></svg><span>C:\Users\Em\Documents\Course Mater</span></div>
<div class="n l3"><i class="mi"></i><svg class="ck"><use href="#chk"/></svg><span>tot_SG_cover</span></div>
<div class="n l5"><span>perTotSG</span></div>
<div class="n l4"><svg class="di c1"><use href="#dia"/></svg><span>0.100000 - 0.300000</span></div>
<div class="n l4"><svg class="di c2"><use href="#dia"/></svg><span>0.300001 - 0.500000</span></div>
<div class="n l4"><svg class="di c3"><use href="#dia"/></svg><span>0.500001 - 0.750000</span></div>
<div class="n l4"><svg class="di c4"><use href="#dia"/></svg><span>0.750001 - 0.920000</span></div>
<div class="n l4"><svg class="di c5"><use href="#dia"/></svg><span>0.920001 - 1.000000</span></div>
<div class="n l3"><i class="mi"></i><svg class="ck"><use href="#unchk"/></svg><span>survey_locations</span></div>
<div class="n l4"><svg class="di c6"><use href="#dia"/></svg></div>
<div class="n l2"><i class="mi"></i><svg class="fo"><use href="#folder"/></svg><span>C:\Users\Em\Documents\Course Mater</span></div>
<div class="n l3"><i class="mi"></i><svg class="ck"><use href="#unchk"/></svg><span>processed_SG_data1.csv Events</span></div>
<div class="n l4"><svg class="di c7"><use href="#dia"/></svg></div>
<div class="n lt"><svg><use href="#tbl"/></svg><span>processed_SG_data1.csv</span></div>
<div class="n l2"><i class="mi"></i><svg class="fo"><use href="#db"/></svg><span>C:\Users\Em\Documents\ArcGIS\Defau</span></div>
<div class="n l3"><i class="mi"></i><svg class="ck"><use href="#chk"/></svg><span>survey_area_Project</span></div>
<div class="n lp"><i class="sw green"></i></div>
<div class="n l2"><i class="mi"></i><svg class="fo"><use href="#db"/></svg><span>C:\Users\Em\Documents\Course Mater</span></div>
<div class="n l3"><i class="mi"></i><svg class="ck"><use href="#chk"/></svg><span>survey_area</span></div>
<div class="n lp"><i class="sw blue"></i></div>
<div class="n l2"><i class="mi"></i><svg class="fo"><use href="#folder"/></svg><span>C:\Users\Em\Documents\Course Mater</span></div>
<div class="n l3"><i class="mi"></i><svg class="ck"><use href="#chk"/></svg><span>Gulf_coast_states</span></div>
</div>
<div class="vs"><svg><use href="#cv"/></svg><i></i><svg class="dn"><use href="#cv"/></svg></div>
<div class="hs"><svg><use href="#cl"/></svg><i></i><svg class="rt"><use href="#cl"/></svg></div>
</div>
</aside>

<section class="view">
<div class="corner"></div>
<svg class="hr" viewBox="473 271 1386 29">
<defs><pattern id="ht" x="802.600" y="271" width="66.400" height="29" patternUnits="userSpaceOnUse"><path d="M.8 8v18" stroke="#222" stroke-width="1.500"/><path d="M33.200 18v8" stroke="#222" stroke-width="1.500"/><path d="M6.640 22.500v3.500M13.280 22.500v3.500M19.900 22.500v3.500M26.600 22.500v3.500M39.800 22.500v3.500M46.500 22.500v3.500M53.100 22.500v3.500M59.800 22.500v3.500" stroke="#222" stroke-width="1.500"/></pattern></defs>
<rect x="803.500" y="274.500" width="728" height="23" fill="#fff" stroke="#a0a0a0" stroke-width="1.500"/><rect x="806" y="277" width="7" height="19" fill="#a8a8a8"/><rect x="1521" y="276" width="10" height="20" fill="#a8a8a8"/>
<rect x="808" y="271" width="722" height="29" fill="url(#ht)"/>
<g class="num"><text x="873" y="289">1</text><text x="939" y="289">2</text><text x="1005" y="289">3</text><text x="1072" y="289">4</text><text x="1138" y="289">5</text><text x="1204" y="289">6</text><text x="1271" y="289">7</text><text x="1338" y="289">8</text><text x="1404" y="289">9</text><text x="1470" y="289">10</text></g></svg>
<div class="vs mv"><svg><use href="#cv"/></svg><i></i><svg class="dn"><use href="#cv"/></svg></div>
<svg class="vr" viewBox="445 300 28 663">
<defs><pattern id="vt" x="445" y="403" width="28" height="66.500" patternUnits="userSpaceOnUse"><path d="M8 .8h17" stroke="#222" stroke-width="1.500"/><path d="M19 33.200h6" stroke="#222" stroke-width="1.500"/><path d="M22 6.650h3M22 13.300h3M22 19.900h3M22 26.600h3M22 39.900h3M22 46.500h3M22 53.100h3M22 59.800h3" stroke="#222" stroke-width="1.500"/></pattern></defs>
<rect x="448" y="372.500" width="22" height="561" fill="#fff" stroke="#a0a0a0" stroke-width="1.500"/><rect x="450" y="375" width="19" height="6" fill="#a8a8a8"/><rect x="450" y="923" width="19" height="10" fill="#a8a8a8"/>
<rect x="445" y="377" width="28" height="555" fill="url(#vt)"/>
<g class="num"><text transform="translate(463 398) rotate(-90)">8</text><text transform="translate(463 465) rotate(-90)">7</text><text transform="translate(463 531) rotate(-90)">6</text><text transform="translate(463 598) rotate(-90)">5</text><text transform="translate(463 664) rotate(-90)">4</text><text transform="translate(463 731) rotate(-90)">3</text><text transform="translate(463 797) rotate(-90)">2</text><text transform="translate(463 864) rotate(-90)">1</text></g></svg>
<svg class="canvas" viewBox="476 303 1383 660">
<path d="M1535 377h7v565H808v-7h727z" fill="#808080"/>
<rect x="802" y="370.500" width="732" height="564" fill="#fff" stroke="#111" stroke-width="1.700"/>
<rect x="813.500" y="381" width="708.500" height="543" fill="none" stroke="#aaa" stroke-dasharray="2 1.500"/>
<rect x="858.700" y="424.200" width="631" height="455" fill="none" stroke="#999" stroke-width="1.300" stroke-dasharray="5 4"/>
<text class="mt" x="1018" y="423.500" textLength="321">Seagrass cover in Big Bend, Florida in 2009-2010</text>
<rect x="861.800" y="427.500" width="625.400" height="448.500" fill="#ccc"/>
<path d="M1468 428l-1 24 7 13 1 19 5 20 7 28V428z" fill="#fff"/><path d="M1468 428l-1 24 7 13 1 19 4 18 6 28M1478 518l6 3-1 10M1480 520l5 12" fill="none" stroke="#111" stroke-width="1.800"/>
<path d="M1101 428l35 2 60 3 50 4 57 2 37 3 12 3 0 17 5 10 7 2 9 1 10-4 4-12-1-12 2-17M1340 442l20-1" fill="none" stroke="#111" stroke-width="1.800"/>
<g transform="translate(800 480) scale(.35714 .33333)" class="coast">
<path fill="#fff" d="M173 150L195 155 225 165 250 190 272 230V280H320L345 268 410 266 440 262 480 240 530 212 580 182 630 172 670 172 650 150 655 122 675 108 700 97 735 97 760 110 800 150 900 190 970 260 1045 310 1050 370 1130 430 1190 490 1225 525 1300 545V945L1318 985 1310 1030 1290 1060V1092L1320 1130 1340 1188H173z"/>
<path fill="#fff" d="M173 85l10 14 12 15 25 15-30 12-17 5zM885 138l38 22-18 26-20-28zM1220 508l85 4v14l-85-6z"/>
<path class="k" d="M173 85l10 15 8-1 3 20 10 8 20 3 12-5-15-8 0-14-8 14-3 10-12-3M173 135l10 15 35 13 25 20 12 20 17 25v52h48l25-12 40-2 25 4 20-5M228 198l-4 30 8 28 8 22 12 10 55-7 18 4M245 285h30M436 262l18-12 46-22 40-24 40-22 38-7 10-7h10M665 148l-38-4v12h38v-8l-15-6 6-16 2-14 16-9 16 2 12-10 18-3 10 8 10-6M630 173l10 12 22 2 10-12-8-8"/>
<path class="k3" d="M400 255l12-8M416 248l6-16M428 244l10-16M443 238l14-16M434 256l6-4M202 128l30-2M214 108v16M634 182l32-2M244 286l8 3"/>
<path class="j" d="M272 280h48l25-12 60-2M440 260l60-30 80-46 48-10M228 198l-4 50 14 32"/>
<path class="j" d="M656 138l4-28 30-8 45-5M630 148h35M640 172l25 2"/>
<path class="k2" d="M376 322l30-8 45-25 35-12 40-35M528 238l25-4 18-14M890 150l30 10M1220 518v-10l20 2 50 4 12-4v12"/>
<path fill="#ccc" class="k" d="M310 285l12-5 35 2 12 12-12 14-20-4zM350 305l25 17"/>
<path class="j" d="M1308 530l12 35 18 42 15 16"/>
<path class="k3" d="M1368 628l4 65-3 45"/><path class="k" d="M1375 632v60M1378 700v25"/><path class="k2" d="M1133 395l6 10M1188 460l6 10M1192 540h6"/>
<path fill="#e4f5c8" stroke="#777" stroke-width="1.200" d="M723 122l12-25h30l28-12 32 20 25 23 33 7 22 47 27-24 23 15 20 22 25 55 60 32 12 18v48l68 52 50 65 30 52 83 8 42 80 17 35 3 120 9 40-39 130-45 18-15-33 15-10-28-47 18-13-23-35 35-13-22-27 20-25-25-25 27-23-35-27 33-40v-45l-70-33-48-65-107-72-60-50 25-20-8-28-64-34-38-48-100-50h-42l-18-35z"/>
<path class="k2" d="M888 149l15 1 17 9M726 120h14"/>
<path class="dots" d="M740 116v6M756 102v6M767 111v6M779 111v6M790 108v6M802 102v6M832 128v8M832 142v16M849 138v6M861 138v6M782 161v6M802 152v6M819 152v6M827 165v6M841 170v6M874 170v6M928 170v6M937 180v6M937 197v6M895 206v6M911 206v6M960 205v6M962 218v16M949 228v6M970 237v6M962 245v6M996 268v6M1004 265v6M1042 287v6M1050 290v6M1046 336v6M1033 360v6M1067 376v6M1063 383v7M1134 417v6M1286 535v14M1294 552v6M1306 629v6M1318 634v6M1328 629v6M1340 629v6M1289 647v6M1311 657v6M1306 669v6M1294 675v6M1297 711v6M1316 714v8M1318 714v8M1311 738v6M1326 737v6M1329 742v10M1332 740v12M1349 732v16M1306 761v6M1320 765v6M1294 773v6M1306 773v6M1354 769v6M1297 787v6M1336 785v16M1303 805v6M1315 809v6M1289 815v6M1282 819v6M1340 819v6M1325 838v6M1331 836v6M1282 853v14M1298 845v10M1294 877v6M1304 884v12M1312 879v8M1309 896v6M1324 903v6M1285 905v8M1288 914v7"/>
<path class="k2" d="M1303 945l8 15 5 30-8 30-12 25-6 20v30M1290 993l12 4-4 50-8 30"/><path class="k3" d="M1290 1095l20 20 18 30 10 43"/>
<path fill="#ccc" d="M1302 1050l36-10 47 35 6 30-12 20-6 32-18 2-20-15-38-50-5-25z"/>
</g>
<g transform="translate(1180 480) scale(.33333)" class="coast"><path class="k" fill="#fff" d="M305 1014l20 3 20 14 26 10 2 25-3 26 10 8 23 3 2-8-7-10 2-22 20-8 10-4 0 12 10 18 4 26-8 22-15 6-16 8-22 23-17 22h-66l-4-30 20 4 14-6 4-36 10-20-5-22-22-12-25-12 8-18 12-8z"/><path class="k2" d="M305 1014h18M423 1052h10v10M425 1130h14M385 1165l10 5M240 1085l5 15 20 5M366 1060v8"/><path class="j" d="M308 1014l38 17 26 12 5 50 28 10 0-40 28-8 12 50-8 26-38 24-25 30M293 1052l45 28 12 26-12 26-6 28-18-4"/><path class="k3" d="M270 1100l12 35"/></g>
<rect x="861.800" y="427.500" width="625.400" height="448.500" fill="none" stroke="#111" stroke-width="1.700"/>
<g transform="translate(800 480) scale(.35714 .33333)" class="coast">
<rect x="202" y="670" width="967" height="495" fill="#fff" stroke="#111" stroke-width="1.600"/>
<path fill="none" stroke="#444" stroke-width="1.200" d="M950 945v139h135"/>
<path class="st" d="M367 707H467V775L478 780 500 784 530 790 560 798 610 800 630 798 661 812V865L680 905 668 945 635 955 600 985 565 1000 545 1030 552 1060 556 1083 500 1065 482 1025 460 990 435 945 390 940 375 950 362 970 345 965 318 950 308 925 285 905 247 867V864H367z"/>
<path class="st" d="M661 828H757L762 858 740 901H803L805 930 815 945 808 965 770 968 740 945 668 945 680 905 661 865z"/>
<path class="st" d="M782 760H1020L1018 768 1040 785 1078 830 1095 862 1078 905 1080 940 1100 985 1125 1050 1120 1085 1105 1108 1090 1100 1065 1065 1040 1020 1035 970 1010 945 990 932 960 948 945 930 930 922 820 924 803 901H740L762 855 758 800z"/>
<path class="kk" d="M857 760l-4 60-6 60 2 45M942 760l10 60 8 40v40h-85l6 20M960 900l5 14 90 0 5 8v-12h20"/>
<path class="k" d="M467 775l33 9 30 6 30 8 50 2 20-2 31 12M247 867l38 38 23 20 10 25 27 15 17 5 13-20 15-10 45 5 25 45 22 35 18 40 56 18M661 865l19 40-12 40M758 800l4 55-22 46M782 760l-24 40M1120 1085l-20 35-35 10"/>
<path class="j" d="M467 775l33 9 60 14 70 0M247 867l38 38 33 45 44 20M435 945l65 120 56 18M661 865l19 40-12 40 72 0M782 760l-24 40 4 55-22 46M803 901l5 30M820 924h110l15 6 15 18 30-16 20 13 25 25M1018 768l60 62 17 32-17 43 2 35 20 45 25 65-5 35-15 23M1118 1110l-50 20M970 900l90 18"/>
<path class="k3" d="M552 1083v-22l-7-31 20-30 35-15 35-30 34-10M545 1018v20M725 945l15 5M735 955l35 12 35-10 18 14M800 930l10 20 10 10M850 915l6 10 12-8 6 8M1035 1005l5 20 22 35 22 35M1100 985l8 25M830 938v5"/>
<path fill="#222" d="M368 570h453v16H368z"/><path fill="#fff" d="M401 574h26v8h-26zM457 574h25v8h-25zM595 574h110v8H595z"/>
</g>
<g transform="translate(893.500 670)"><path d="M-9-9L9 9M9-9L-9 9" stroke="#4b4b58" stroke-width="1.800"/><path d="M0-17L3-3 17 0 3 3 0 17-3 3-17 0-3-3z" fill="#303a48"/><path d="M0-17v17L-3-3z" fill="#f2a05c"/><path d="M0 0v17l3-14z" fill="#9ccbe8"/><path d="M-1.500-21h3M-1.500 21h3M-21 0h3M18 0h3" stroke="#9aa6b6" stroke-width="2"/></g>
<g class="sc"><text x="931" y="684">0</text><text x="953" y="684">15</text><text x="972" y="684">30</text><text x="1011" y="684">60</text><text x="1052" y="684">90</text><text x="1092" y="684">120</text><text x="1094" y="674.500" textLength="42">Kilometers</text></g>
<text class="mt" x="1392" y="900" textLength="97">Map by: EFoster</text>
</svg>
<div class="foot"><svg class="dv" viewBox="0 0 12 12"><path d="M.7.700h10.600v10.600H.7z" fill="#b8dc9a" stroke="#333" stroke-width="1.300"/><path d="M2 10l8-8v8z" fill="#f4f9e8"/></svg><b class="lv"><svg viewBox="0 0 12 12"><path d="M1 .7h7l3 3v7.600H1z" fill="#fff" stroke="#333" stroke-width="1.400"/><path d="M3.500 5h5M3.500 8h5" stroke="#333" stroke-width="1.400"/></svg></b><i class="bar"></i><svg class="rf" viewBox="0 0 14 14"><path d="M2 6c1-4 6-5 9-2M12 8c-1 4-6 5-9 2" fill="none" stroke="#1f4e94" stroke-width="1.800"/><path d="M13 1v5H8zM1 13V8h5z" fill="#1f4e94"/></svg><svg class="pa" viewBox="0 0 10 12"><path d="M2.500 1v10M7.500 1v10" stroke="#2c5ba8" stroke-width="2.400"/></svg><svg class="lf"><use href="#cl"/></svg><i class="th"></i><svg class="rt"><use href="#cl"/></svg></div>
</section>
<aside class="side"><div class="tab"><svg viewBox="0 0 26 26"><path d="M2 4h17v20H2z" fill="#e4f0fb" stroke="#4a6a8c" stroke-width="1.600"/><path d="M4.500 6.500h4v4h-4z" fill="#3f83c4"/><path d="M4.500 12.500h4v4h-4z" fill="#5a9a3a"/><path d="M4.500 18.500h4v4h-4z" fill="#d88a2c"/><path d="M11 9h6M11 15h6M11 21h6" stroke="#7da0c4"/><path d="M12 15l1-4 8-8 3 3-8 8z" fill="#f0b64e" stroke="#86581a" stroke-width=".8"/><path d="M20 3l2-2 3 3-2 2z" fill="#e07a86"/></svg><span>Create Features</span></div></aside>
</main>
<footer class="status"><span class="p1">-82.534&nbsp; 30.419 Decimal Degrees</span><span>7.58&nbsp; 7.07 Inches</span></footer>

<section class="slider">
<div class="sh"><span>Time Slider</span><i>×</i></div>
<div class="st-t"><svg class="m1" viewBox="0 0 24 24"><path d="M1 1h21v21H1z" fill="#bcd58a" stroke="#555" stroke-width="1.800"/><path d="M14 3h7v8z" fill="#a8cfee"/><circle cx="16" cy="16" r="7" fill="#fff" stroke="#888" stroke-width="1.500"/><path d="M15 12v5l4 2" stroke="#e04a40" stroke-width="1.800" fill="none"/></svg><i></i><svg class="m2"><use href="#t5"/></svg><i></i><svg class="m3" viewBox="0 0 24 20"><path d="M0 3h24M0 17h24" stroke="#777" stroke-width="4"/><path d="M0 3h24M0 17h24" stroke="#eee" stroke-width="1.500" stroke-dasharray="1.500 1.500"/><path d="M5 4v12M19 4v12" stroke="#777" stroke-width="3"/></svg><i></i><strong>2009</strong><i></i><svg class="m4" viewBox="0 0 70 22"><path d="M0 8.500h20v4H0zM24 8.500h8V1h4v7.500h8v4h-8V20h-4v-7.500h-8zM57 3v16l-8-8zM60 3v16l8-8z" fill="#7d9cd6" stroke="#5c7cba" stroke-width=".6"/></svg></div>
<div class="st-b">
<b><svg viewBox="0 0 24 24"><path d="M4 3v18" stroke="#a2a2a2" stroke-width="3.500"/><path d="M21 3v18L9 12z" fill="#a4a4a4" stroke="#f0f0f0"/></svg></b>
<div class="track"><svg class="knob" viewBox="0 0 17 36"><path d="M4 1h9L8.500 5.500z" fill="#111"/><path d="M0 13l8.500-6 8.500 6v23H0z" fill="#1883d8"/></svg><i></i><u></u></div>
<b class="e"><svg viewBox="0 0 24 24"><path d="M4 3v18l11-9z" fill="url(#gBlue)"/><path d="M19 3v18" stroke="#3b66bd" stroke-width="3"/></svg></b><b class="e"><svg viewBox="0 0 24 24"><path d="M7 3v18l12-9z" fill="url(#gBlue)"/></svg></b>
<b><svg viewBox="0 0 24 24"><path d="M14 6l-5 6 5 6M21 6l-5 6 5 6" stroke="#a2a2a2" stroke-width="2" fill="none"/></svg></b>
<div class="yrs"><span>2009</span><span>2010</span></div>
<b class="d"><svg viewBox="0 0 24 24"><path d="M7 6l5 6-5 6M14 6l5 6-5 6" stroke="#a2a2a2" stroke-width="2" fill="none"/></svg></b><b class="on"><svg viewBox="0 0 24 26"><circle cx="12" cy="16" r="8" fill="#f4f4f4" stroke="#888" stroke-width="1.800"/><path d="M12 11v5l3 3" stroke="#e04a40" stroke-width="1.800" fill="none"/><path d="M2 9c4-7 12-8 17-4" stroke="#34619f" stroke-width="2.600" fill="none"/><path d="M22 1v8h-8z" fill="#34619f"/></svg></b>
</div>
</section>

<footer class="task">
<svg class="start" viewBox="0 0 24 24"><path d="M0 3.500l10-1.500v9.500H0zM11.500 1.800L24 0v11.500H11.500zM0 13h10v9.500L0 21zM11.500 13H24v11l-12.500-1.800z" fill="#fff"/></svg>
<div class="search"><svg viewBox="0 0 26 26"><circle cx="16" cy="9.500" r="8" fill="none" stroke="#eee" stroke-width="1.700"/><path d="M10 16L1 25" stroke="#eee" stroke-width="1.700"/></svg><span>Type here to search</span></div>
<div class="apps">
<b><svg viewBox="0 0 32 32"><circle cx="16" cy="16" r="11" fill="none" stroke="#fff" stroke-width="2.800"/></svg></b>
<b><svg viewBox="0 0 32 32"><path d="M5 5v3h16V5M5 27v-4h16v4M5 12h16v8H5zM26.500 5v4M26.500 15v12" fill="none" stroke="#fff" stroke-width="1.500"/><path d="M25 10.500h3v3h-3z" fill="#fff"/></svg></b>
<b class="run"><svg viewBox="0 0 36 36"><path d="M2 5h13l3 3v5H2z" fill="#e0a22e"/><path d="M2 9h32v22H2z" fill="#fcd45f"/><path d="M7 32v-9c0-2 1-3 3-3h16c2 0 3 1 3 3v9h-6v-5H13v5z" fill="#3a93dc"/></svg></b>
<b class="run"><svg viewBox="0 0 36 36"><circle cx="18" cy="18" r="17" fill="#fbc116"/><path d="M18 18L3.300 9.500A17 17 0 0 1 32.700 9.500L33 10H18z" fill="#e24333"/><path d="M18 35A17 17 0 0 1 3.300 9.500l8 14 9 2z" fill="#24a050"/><path d="M18 10h15A17 17 0 0 1 18 35l7-13z" fill="#fbc116"/><circle cx="18" cy="18" r="8.200" fill="#fff"/><circle cx="18" cy="18" r="6.400" fill="#4285f4"/></svg></b>
<b class="r"><em>R</em></b>
<b class="run"><svg viewBox="0 0 36 36"><path d="M11 2h23v32H11z" fill="#21a366"/><path d="M11 2h11v8H11z" fill="#1a8f57"/><path d="M22 2h12v8H22z" fill="#33c481"/><path d="M11 18h11v8H11z" fill="#107c41"/><path d="M11 26h23v8H11z" fill="#185c37"/><path d="M1 9h17v18H1z" fill="#107c41"/><text x="9.500" y="23.500" class="ms">X</text></svg></b>
<b class="run act"><svg class="big"><use href="#arcgis"/></svg></b>
<b class="run"><svg viewBox="0 0 36 36"><path d="M10 2h24v8H10z" fill="#41a5ee"/><path d="M10 10h24v8H10z" fill="#2b7cd3"/><path d="M10 18h24v8H10z" fill="#185abd"/><path d="M10 26h24v8H10z" fill="#103f91"/><path d="M1 9h17v18H1z" fill="#185abd"/><text x="9.500" y="23.500" class="ms">W</text></svg></b>
</div>
<svg class="tray" viewBox="1340 1020 400 60"><g fill="none" stroke="#fff" stroke-width="1.500">
<path d="M1355 1054l8.500-9 8.500 9"/><rect x="1403" y="1038" width="18" height="24" rx="9" fill="#0a84ff" stroke="none"/><path d="M1407.500 1045l9 9-4.500 4.500v-17l4.500 4.500-9 9"/>
<path d="M1454 1040l5.500 4-5.500 4-5.500-4zM1466 1040l5.500 4-5.500 4-5.500-4zM1454 1048l5.500 4-5.500 4-5.500-4zM1466 1048l5.500 4-5.500 4-5.500-4zM1460 1054l5 3.500-5 3.500-5-3.500z" fill="#fff" stroke="none"/>
<path d="M1497 1041l22-3v15M1497 1041v18h12M1503 1050c1-4 7-5 9-1M1512 1053c-1 4-7 5-9 1M1512 1045v4h-4M1503 1058v-4h4"/><circle cx="1514.500" cy="1056.500" r="5.500" fill="#ff9a0a" stroke="none"/>
<path d="M1553 1044.500h14v13h-16v-6M1567 1048h2v6h-2M1545 1046h7v3c0 4-7 4-7 0zM1547 1042v4M1550.500 1042v4M1548.500 1052v5h3"/><path d="M1552 1052h3v5h-3z" fill="#fff"/>
<path d="M1597 1060c0-12 7-18 17-18" stroke="#8c7f7f"/><path d="M1602 1060c0-9 5-13 12-13M1606 1060c0-5 3-8 8-8M1611 1060c0-2 1-3 3-3"/><circle cx="1612.500" cy="1058" r="1.800" fill="#fff"/>
<path d="M1641 1047h4l5-5v17l-5-5h-4zM1653 1047c2 2 2 5 0 7M1656 1044c4 4 4 9 0 13"/><path d="M1659 1041c5 5 5 13 0 18" stroke="#8c7f7f"/>
<path d="M1697 1053c-1-4 8-4 11-9l3-4c2-1 4 1 2 3l-7 15c-1 2-5 1-3-2l6-10M1697 1053c0 8 6 6 9 0l2-3h6c3 0 1 5-2 4"/></g></svg>
<div class="clock"><span>12:24 PM</span><span>4/17/2021</span></div>
<svg class="note" viewBox="0 0 26 26"><path d="M1 2h23v17h-8l-3.500 4.500L9 19H1z" fill="none" stroke="#fff" stroke-width="1.500"/></svg><i class="desk"></i>
</footer>
</body>
</html>
```
FILE: styles.css
```css
* { box-sizing: border-box; }
body { margin: 0; width: 1920px; height: 1080px; overflow: hidden; position: relative; display: flex; flex-direction: column; font: 17px "Open Sans", "Noto Sans", sans-serif; letter-spacing: -0.15px; color: #1c1c1c; background: linear-gradient(90deg, #f0f0f0 0%, #f0f0f0 20%, #fcfcfc 100%); }
svg { display: block; flex: none; }
i, em { font-style: normal; }
u { text-decoration: none; }
b { font-weight: normal; }
.defs { position: absolute; width: 0; height: 0; }
.edge { position: absolute; left: 779px; top: 0; width: 362px; height: 2px; background: linear-gradient(90deg, #97215a 72px, #222 72px); }

.title { height: 35px; flex: none; background: #fff; display: flex; align-items: center; padding: 0 29px 0 2px; font-size: 18px; letter-spacing: -0.2px; color: #000; }
.title .app { width: 25px; height: 25px; margin-right: 4px; }
.title .wc { width: 160px; height: 20px; margin-left: auto; margin-right: -5px; }
.menu { height: 38px; flex: none; display: grid; grid-template-columns: 50px 55px 61px 113px 67px 96px 141px 109px 97px auto; padding-left: 18px; line-height: 38px; }

.bars { height: 195px; flex: none; }
.row { height: 39px; display: flex; align-items: flex-start; }
.tb { height: 37px; display: flex; align-items: center; background: linear-gradient(#fbfbfb, #efefef); border-radius: 3px; }
.tb .grip { width: 5px; height: 24px; margin: 0 4px 0 3px; background: repeating-linear-gradient(#bbb 0 3px, transparent 3px 7px); background-size: 3px 100%; background-repeat: no-repeat; flex: none; }
.tb b, .toc-t b { width: 33.3px; height: 33px; display: flex; align-items: center; justify-content: center; flex: none; }
.tb b svg { width: 24px; height: 24px; }
b.on { border: 2px solid #2a8ad8; background: #dcebf7; }
.sep { width: 8.4px; height: 24px; flex: none; background: linear-gradient(#bdbdbd, #bdbdbd) 50% / 1.5px 100% no-repeat; }
.dd { width: 17px; flex: none; display: flex; justify-content: center; }
.dd::before { content: ""; border: 4px solid transparent; border-top: 5px solid #111; border-bottom: 0; margin-right: 4px; }
.dd.off::before { border-top-color: #aaa; }
.ovf { width: 17px; height: 37px; margin-left: auto; flex: none; background: linear-gradient(#f2f2f2, #a4a4a4); display: flex; flex-direction: column; align-items: center; justify-content: flex-end; padding-bottom: 3px; gap: 3px; }
.ovf::before { content: ""; width: 9px; height: 2px; background: #111; }
.ovf::after { content: ""; border: 5px solid transparent; border-top: 6px solid #111; border-bottom: 0; }
.lbl { flex: none; white-space: nowrap; color: #111; }
.w76 { width: 75px; } .w169 { width: 169px; } .w48 { width: 47px; } .w122 { width: 122px; }
.r1 { width: 788px; margin-left: 4px; }
.r1 .grip { margin-left: 3px; margin-right: 2px; }
.r2 { width: 925px; margin-left: 729px; }
.r2 .grip { margin-left: 5px; margin-right: 0; }
.snap { width: 259px; margin-left: 7px; }
.snap .grip { margin-right: 8px; }
.snap .sn { border: 1.5px solid #aebac4; background: #dbe8f2; margin-right: -0.5px; position: relative; left: -1px; }
.r3 { width: 365px; margin-left: 512px; }
.r3 .grip { margin-right: 2px; }
.r4 { width: 255px; margin-left: 276px; }
.r4 .dd, .r4 b { margin-left: -1px; }
.r4 .grip, .ed .grip { margin-right: 10px; }
.ed { width: 622px; margin-left: 478px; }
.ed .grip { margin-right: 9px; }
.ed .dd.off { width: 15px; }
.r5 { width: 576px; margin-left: 4px; }
.r5 .grip { margin-right: 2px; }
.geor { width: 854px; margin-left: 6px; }
.geor .grip { margin-right: 9px; }
.geor .dd.off { margin: 0 2px 0 -2px; }
.combo { flex: none; height: 31px; border: 1.5px solid #707070; background: #fff; padding: 0 8px 0 3px; display: flex; align-items: center; justify-content: space-between; }
.combo span { line-height: 26px; margin-bottom: 2px; }
.combo em { width: 9px; height: 9px; border: solid #555; border-width: 0 1.5px 1.5px 0; transform: translateY(-2px) rotate(45deg); }
.scale { width: 221px; letter-spacing: -0.6px; }
.zoom { width: 90px; letter-spacing: -1px; }
.combo.dis { width: 270px; border-color: #bfbfbf; background: #cbcbcb; height: 30px; }
.combo.dis em { border-color: #aaa; margin-left: auto; }
.combo.box { width: 112px; height: 27px; }
.oldcombo { width: 268px; height: 28px; border: 2px solid #777; border-right-color: #fff; border-bottom-color: #fff; box-shadow: inset 1px 1px #aaa; background: #f0f0f0; display: flex; justify-content: flex-end; }
.oldcombo em { width: 24px; border: 1.5px solid #fff; border-right-color: #777; border-bottom-color: #777; display: flex; align-items: center; justify-content: center; }
.oldcombo em::before { content: ""; border: 5px solid transparent; border-top: 6px solid #999; border-bottom: 0; }

main { height: 722px; flex: none; display: flex; }
.toc { width: 435px; flex: none; }
.toc-h { height: 30px; display: flex; align-items: center; justify-content: space-between; padding: 0 0 0 7px; background: linear-gradient(90deg, #bccddf, #d7e4f2); color: #333; }
.toc-h svg { width: 50px; height: 20px; margin-bottom: 3px; margin-right: -2px; }
.toc-t { height: 39px; display: flex; align-items: center; padding-left: 5.5px; background: linear-gradient(#fcfcfc, #efefef); }
.toc-t b { width: 33px; }
.toc-t svg { width: 24px; height: 24px; }
.toc-t .sep { width: 8px; }
.treebox { height: 652px; width: 434px; border: 2px solid #828790; display: grid; grid-template: 623px 25px / 404px 24px; background: #f0f0f0; }
.tree { overflow: hidden; background: #fff; }
.n { height: 27.02px; display: flex; align-items: center; white-space: nowrap; }
.n strong { letter-spacing: -0.5px; }
.mi { width: 13px; height: 13px; border: 1.5px solid #999; border-radius: 2px; background: linear-gradient(#3d6cb8, #3d6cb8) 50% 50% / 7px 1.5px no-repeat, #fafafa; flex: none; margin-top: 5px; }
.l1 { padding-left: 12px; } .l1 strong { margin-left: 7px; }
.l2 { padding-left: 40px; } .l2 span { margin-left: 8px; letter-spacing: -0.04px; }
.l3 { padding-left: 69px; } .l3 span { margin-left: 12px; letter-spacing: -0.17px; }
.fo { width: 23px; height: 20px; margin-left: 10px; }
.ck { width: 18px; height: 17px; margin-left: 11px; }
.l4 { padding-left: 119px; } .l4 span { margin-left: 14px; letter-spacing: -0.33px; }
.l5 { padding-left: 151px; }
.lt { padding-left: 91px; } .lt svg { width: 20px; height: 18px; } .lt span { margin-left: 12px; }
.lp { padding-left: 117px; }
.di { width: 10px; height: 10px; }
.c1 { color: #2b83ba; } .c2 { color: #80b582; } .c3 { color: #fdf56a; } .c4 { color: #f08a35; } .c5 { color: #e01a1c; } .c6 { color: #8a5a00; } .c7 { color: #10a588; }
.sw { width: 22px; height: 17px; border: 1.5px solid #777; }
.green { background: #e4f5c8; } .blue { background: #c9dbfb; }
.vs { display: flex; flex-direction: column; align-items: center; background: #f0f0f0; }
.vs svg, .hs svg { width: 12px; height: 12px; }
.vs > svg { margin-top: 7px; }
.vs i { width: 22px; height: 437px; background: #cdcdcd; margin-top: 7px; }
.vs .dn { margin-top: auto; margin-bottom: 7px; transform: rotate(180deg); }
.hs { grid-column: 1 / 3; display: flex; align-items: center; background: #f0f0f0; padding-bottom: 2px; }
.hs svg { margin-left: 7px; }
.hs i { width: 144px; height: 22px; background: #cdcdcd; margin-left: 7px; }
.hs .rt { margin-left: auto; margin-right: 31px; transform: rotate(180deg); }

.view { margin-left: 7px; width: 1442px; height: 722px; flex: none; border-left: 3px solid #808080; border-top: 3px solid #808080; background: #f0f0f0; display: grid; grid-template: 29px 663px 27px / 28px 1386px 25px; }
.hr { width: 1386px; height: 29px; }
.vr { width: 28px; height: 663px; grid-row: 2; grid-column: 1; }
.canvas { width: 1386px; height: 663px; border-left: 3px solid #808080; border-top: 3px solid #808080; background: #fff; }
.mv { grid-row: 1 / 3; grid-column: 3; padding-right: 1px; }
.mv > svg:first-child { margin-top: 8px; }
.mv i { height: 393px; margin-top: 118px; }
.mv .dn { margin-bottom: 7px; }
.num { font: 17px "Open Sans", sans-serif; fill: #222; }
.mt { font: 13px "Liberation Sans", Arial, sans-serif; fill: #333; letter-spacing: 0; }
.sc { font: 9.5px "Liberation Sans", Arial, sans-serif; fill: #444; text-anchor: middle; letter-spacing: 0; }
.sc text:last-child { text-anchor: start; }
.coast path, .coast rect { vector-effect: non-scaling-stroke; }
.k { stroke: #0a0a0a; stroke-width: 1.8; }
.k:not([fill]), .k2, .k3, .kk, .j, .dots { fill: none; }
.k2 { stroke: #0a0a0a; stroke-width: 2.6; }
.k3 { stroke: #0a0a0a; stroke-width: 4; }
.j { stroke: #0a0a0a; stroke-width: 3.2; stroke-dasharray: 2 3 1 2 3 4; }
.kk { stroke: #111; stroke-width: 1.5; }
.dots { stroke: #111; stroke-width: 1.7; }
.st { fill: #9b9b9b; stroke: #111; stroke-width: 1.5; }
.foot { grid-column: 1 / 4; display: flex; align-items: center; padding: 0 0 3px 5px; }
.foot .dv { width: 12px; height: 14px; }
.lv { width: 25px; height: 24px; margin-left: 8px; background: #cce4f7; border: 1.5px solid #99c9ef; display: flex; align-items: center; justify-content: center; }
.lv svg { width: 12px; height: 14px; }
.bar { width: 1.5px; height: 20px; background: #888; margin-left: 4px; }
.rf { width: 14px; height: 14px; margin-left: 11px; } .pa { width: 11px; height: 11px; margin-left: 13px; }
.lf, .foot .rt { width: 12px; height: 12px; }
.lf { margin-left: 14px; }
.th { width: 1243px; height: 21px; background: #cdcdcd; margin-left: 10px; }
.foot .rt { margin-left: 11px; transform: rotate(180deg); }
.side { padding: 3px 0 0 6px; }
.tab { width: 31px; height: 176px; border: 1.5px solid #a8a8a8; border-radius: 5px 0 0 5px; background: #f0f0f0; padding: 4px 0 0 1px; }
.tab svg { width: 26px; height: 26px; }
.tab span { writing-mode: vertical-rl; font-size: 17px; line-height: 26px; color: #666; margin-top: 3px; display: block; letter-spacing: .15px; white-space: nowrap; }

.status { height: 30px; flex: none; background: #f0f0f0; display: flex; align-items: center; padding: 4px 0 1px 1154px; color: #222; }
.p1 { width: 387px; letter-spacing: -0.22px; }

.slider { position: absolute; left: 468px; top: 283px; width: 836px; height: 168px; background: rgba(240, 240, 240, .9); box-shadow: 0 2px 10px rgba(0, 0, 0, .3); display: flex; flex-direction: column; }
.sh { height: 45px; background: rgba(255, 255, 255, .55); display: flex; align-items: center; padding: 0 1px 0 12px; justify-content: space-between; font-size: 18px; letter-spacing: .1px; color: #999; }
.sh i { width: 30px; height: 30px; background: #e3e3e3; color: #fff; line-height: 28px; text-align: center; margin-top: 9px; }
.st-t { height: 39px; background: #fff; display: flex; align-items: center; border-bottom: 1.5px solid #c4c4c4; padding: 2px 0 0 3px; }
.st-t > i { width: 1.5px; height: 27px; background: #a5a5a5; flex: none; }
.m1 { width: 24px; height: 24px; margin-right: 3px; } .m2 { width: 22px; height: 24px; margin: 0 5px 0 5px; opacity: .75; } .m3 { width: 25px; height: 20px; margin: 0 3px 0 3px; }
.st-t strong { width: 651px; height: 33px; margin: 0 2px 0 4px; border: 1.5px solid #b4b8be; text-align: center; line-height: 28px; letter-spacing: -.2px; padding-right: 2px; flex: none; }
.m4 { width: 70px; height: 22px; margin-left: 6px; }
.st-b { display: grid; grid-template: 36px 36px / 33px 680px 33px 33px; row-gap: 3px; padding: 6px 0 0 36px; }
.st-b b { width: 33px; height: 36px; background: #d2d2d2; border: 1.5px solid #cacaca; display: flex; align-items: center; justify-content: center; }
.st-b b svg { width: 24px; height: 24px; }
.st-b b.e { background: #e2e2e2; border-color: #b9b9b9; }
.st-b b:nth-child(4), .st-b b:nth-child(8) { margin-left: 7px; }
.st-b b.on { background: #dfeaf4; border: 2px solid #3d95dd; }
.st-b b.on svg { height: 27px; }
.track { display: grid; grid-template-columns: 17px 633px; padding-left: 15px; align-items: start; position: relative; }
.track .knob { width: 17px; height: 36px; }
.track i { height: 18px; margin-top: 13px; background: #e6eaeb; border: 1.5px solid #d6dadb; border-left: 0; }
.track u { position: absolute; left: 657px; top: 0; width: 1.5px; height: 6px; background: #aaa; }
.yrs { display: flex; justify-content: space-between; padding: 9px 15px 0 15px; letter-spacing: -.5px; }

.task { height: 60px; flex: none; background: #3b2626; display: flex; align-items: center; color: #fff; }
.start { width: 24px; height: 24px; margin: 0 25px 0 24px; }
.search { width: 514px; height: 60px; background: #333; border: 2px solid #5b5b5b; display: flex; align-items: center; padding-left: 15px; color: #ddd; font-size: 21px; letter-spacing: .1px; }
.search span { padding-top: 3px; }
.search svg { width: 25px; height: 25px; margin-right: 17px; }
.apps { display: grid; grid-template-columns: 72px 75px 76px 75px 75px 75px 75px 76px; height: 60px; width: 599px; flex: none; }
.apps b { display: flex; align-items: center; justify-content: center; height: 60px; }
.apps svg { width: 34px; height: 36px; }
.apps b:nth-child(-n+2) svg { width: 30px; height: 32px; }
.apps .run { background: linear-gradient(#cb5a90, #cb5a90) 50% 100% / 61px 3px no-repeat; }
.apps .act { background: linear-gradient(#cb5a90, #cb5a90) 50% 100% / 100% 3px no-repeat, #736161; margin: 0 0 0 2px; }
.apps .big { width: 36px; height: 36px; }
.r em { width: 36px; height: 36px; border-radius: 50%; background: #75aadb; font: 25px/36px "Liberation Serif", serif; text-align: center; }
.ms { font: bold 14px "Open Sans", sans-serif; fill: #fff; text-anchor: middle; letter-spacing: 0; }
.tray { width: 400px; height: 60px; margin-left: 154px; }
.clock { width: 95px; display: flex; flex-direction: column; text-align: center; line-height: 28px; letter-spacing: -.3px; font-size: 17px; }
.note { width: 26px; height: 26px; margin-left: 22px; }
.desk { width: 1px; height: 60px; background: #75686a; margin-left: 29px; }
```
